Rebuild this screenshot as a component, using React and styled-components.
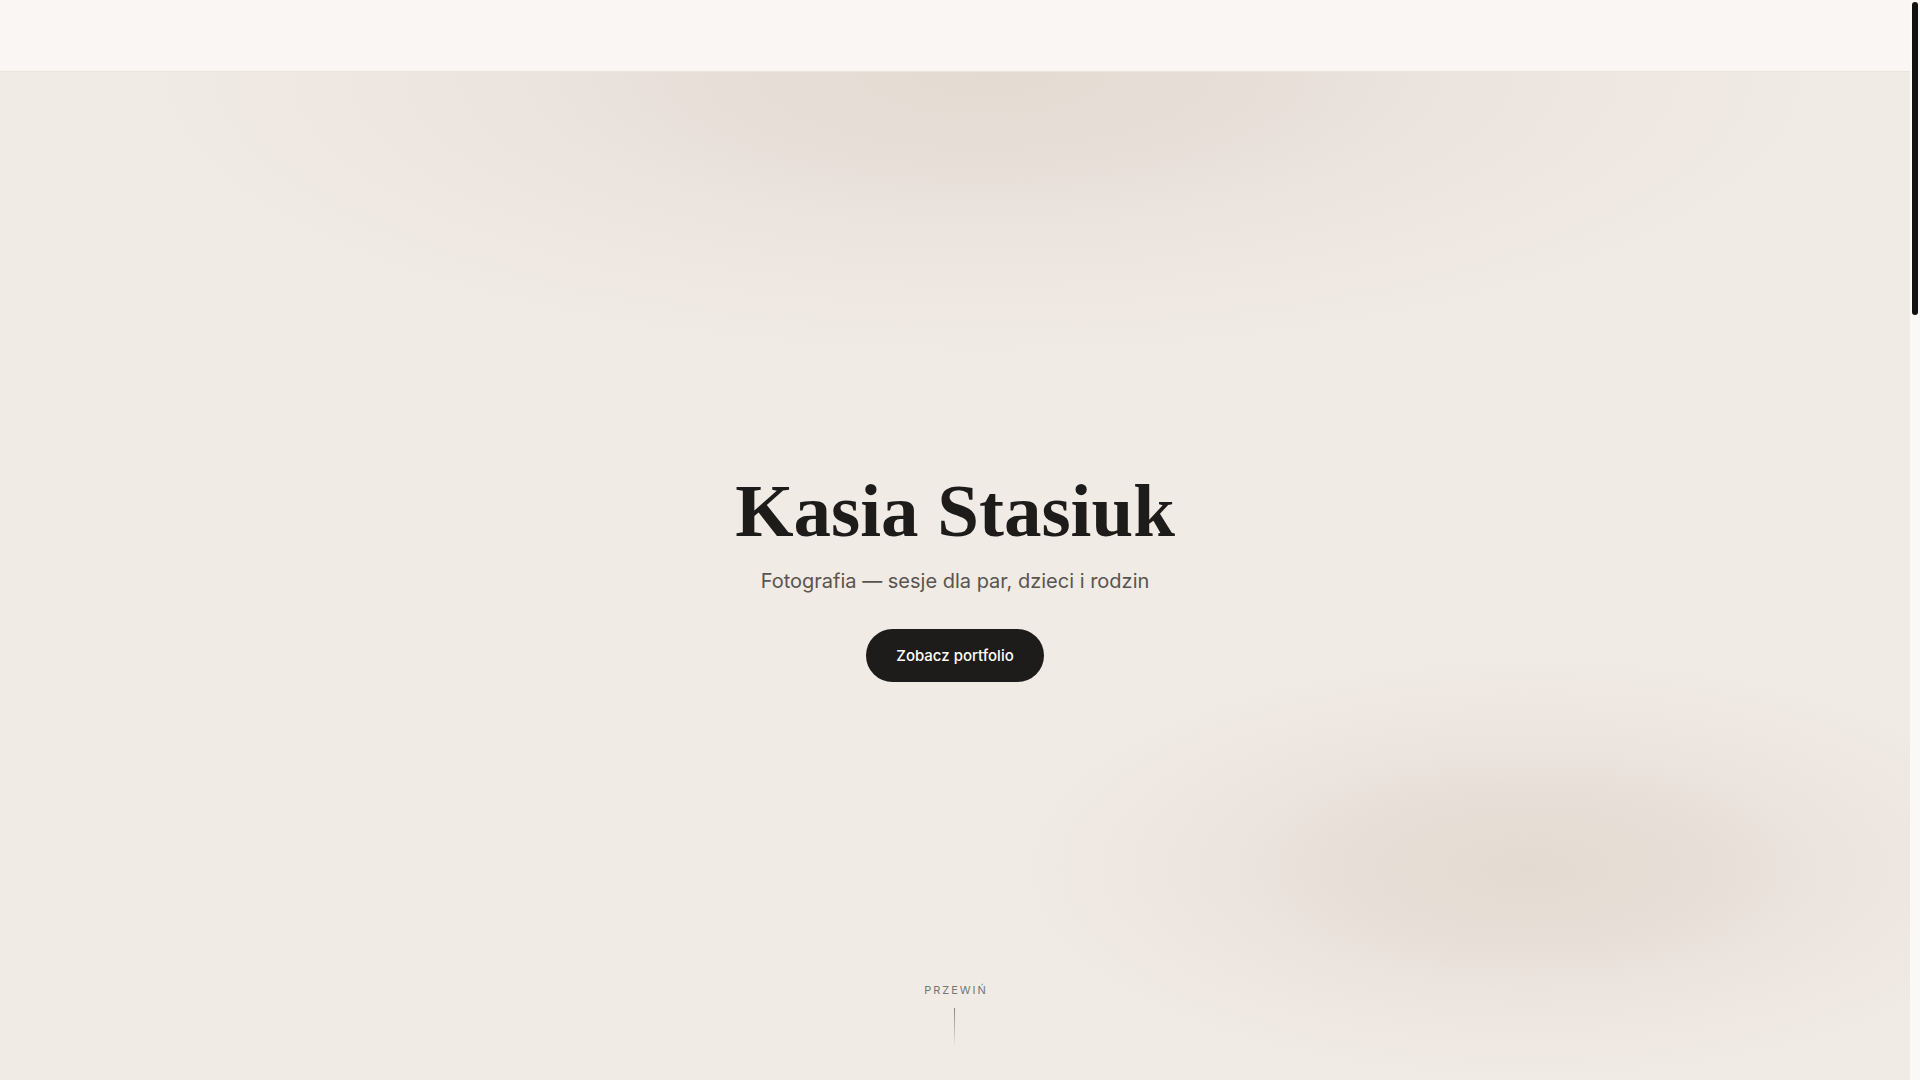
import React, { useEffect, useState } from "react";
import styled, { createGlobalStyle } from "styled-components";

const GlobalStyle = createGlobalStyle`
    *, *::before, *::after { box-sizing: border-box; }
    html { scrollbar-width: none; }
    html::-webkit-scrollbar { display: none; }
    body {
        margin: 0;
        padding-right: 10px;
        background: #f0ebe5;
        color: #1e1c1a;
        font-family: Inter, "Noto Sans", "Liberation Sans", sans-serif;
        -webkit-font-smoothing: antialiased;
    }
`;

// thin custom scrollbar pinned to the right edge
const Rail = styled.div`
    position: fixed;
    top: 0;
    right: 0;
    bottom: 0;
    width: 10px;
    z-index: 50;
    background: #faf9f7;
`;

const Thumb = styled.div`
    position: absolute;
    left: 2px;
    width: 6px;
    border-radius: 3px;
    background: #111111;
`;

const Header = styled.header`
    position: sticky;
    top: 0;
    z-index: 10;
    height: 72px;
    background: rgba(250, 247, 243, 0.94);
    border-bottom: 1px solid #ebe5de;
    backdrop-filter: blur(12px);
`;

const Hero = styled.section`
    min-height: calc(100vh - 72px);
    display: grid;
    grid-template-rows: 1fr auto 1fr;
    justify-items: center;
    background:
        radial-gradient(ellipse 860px 290px at 51.5% 0%, #e3dad1 0%, #e8dfd9 35%, #ede5e0 62%, rgba(240, 235, 229, 0) 100%),
        radial-gradient(ellipse 520px 215px at 80% 79%, #e3dad1 0%, #e8dfd8 38%, #ede5e0 64%, rgba(240, 235, 229, 0) 100%),
        #f0ebe5;
`;

const HeroContent = styled.div`
    grid-row: 2;
    display: flex;
    flex-direction: column;
    align-items: center;
    text-align: center;
`;

const Title = styled.h1`
    margin: 0;
    font-family: "Liberation Serif", "Times New Roman", serif;
    font-weight: 700;
    font-size: 75px;
    line-height: 1.1;
    color: #1e1c1a;
`;

const Subtitle = styled.p`
    margin: 14px 0 0;
    font-size: 20px;
    line-height: 30px;
    color: #5a544f;
`;

const CtaButton = styled.a`
    margin-top: ${props => props.$gap || "33px"};
    display: inline-flex;
    align-items: center;
    justify-content: center;
    height: 53px;
    padding: 0 30px;
    border-radius: 999px;
    background: #1e1c1a;
    color: #ffffff;
    font-size: 15px;
    font-weight: 500;
    text-decoration: none;
`;

const ScrollCue = styled.div`
    grid-row: 3;
    align-self: end;
    padding-bottom: 33px;
    display: flex;
    flex-direction: column;
    align-items: center;
    gap: 10px;
    span {
        font-size: 11px;
        line-height: 16px;
        letter-spacing: 0.18em;
        text-transform: uppercase;
        color: #7b756f;
        margin-right: -0.18em;
    }
    i {
        display: block;
        width: 1px;
        height: 39px;
        background: linear-gradient(#8a847e, rgba(138, 132, 126, 0));
    }
`;

const Section = styled.section`
    padding: ${props => props.$pad || "120px"} 0;
    background: ${props => props.$bg || "#f0ebe5"};
`;

const Container = styled.div`
    width: 1200px;
    margin: 0 auto;
`;

const SectionTitle = styled.h2`
    margin: 0 0 ${props => props.$space || "56px"};
    font-family: "Liberation Serif", "Times New Roman", serif;
    font-size: 44px;
    font-weight: 700;
    text-align: ${props => props.$align || "center"};
    color: #1e1c1a;
`;

const Grid = styled.div`
    display: grid;
    grid-template-columns: repeat(3, 1fr);
    gap: 24px;
`;

const Tile = styled.div`
    aspect-ratio: 4 / 5;
    border-radius: 14px;
    background: ${props => props.$tone};
    display: flex;
    align-items: flex-end;
    padding: 20px;
    font-size: 14px;
    color: #4a4540;
`;

const About = styled.div`
    display: grid;
    grid-template-columns: 1fr 1fr;
    gap: 64px;
    align-items: center;
    p {
        margin: 0 0 18px;
        font-size: 17px;
        line-height: 1.7;
        color: #5a544f;
    }
`;

const Portrait = styled.div`
    aspect-ratio: 1 / 1;
    border-radius: 14px;
    background: linear-gradient(160deg, #e6ddd4, #d8cdc2);
`;

const Contact = styled.div`
    display: flex;
    flex-direction: column;
    align-items: center;
    p {
        margin: 0;
        font-size: 18px;
        color: #5a544f;
    }
`;

const Footer = styled.footer`
    padding: 48px 0;
    border-top: 1px solid #e3dcd4;
    text-align: center;
    font-size: 13px;
    color: #8a847e;
`;

const tiles = [
    ["Sesja narzeczeńska", "#e6ddd4"],
    ["Rodzina w plenerze", "#ddd3c9"],
    ["Dzieci", "#e9e1da"],
    ["Para nad morzem", "#d9cfc5"],
    ["Jesień w parku", "#e4dad0"],
    ["Sesja domowa", "#ded5cc"],
];

// thumb size and offset follow the document scroll
const useScrollThumb = () => {
    const [thumb, setThumb] = useState({ top: 2, height: 318 })
    useEffect(() => {
        const update = () => {
            const doc = document.documentElement
            const view = window.innerHeight
            const total = doc.scrollHeight
            const track = view - 4
            const height = Math.max(40, track * view / total)
            const top = 2 + (track - height) * (window.scrollY / Math.max(1, total - view))
            setThumb({ top, height })
        }
        update()
        window.addEventListener('scroll', update)
        window.addEventListener('resize', update)
        return () => {
            window.removeEventListener('scroll', update)
            window.removeEventListener('resize', update)
        }
    }, [])
    return thumb
}

export default function App() {
    const thumb = useScrollThumb()
    return (
        <>
            <GlobalStyle />
            <Rail>
                <Thumb style={{ top: thumb.top, height: thumb.height }} />
            </Rail>
            <Header />
            <Hero>
                <HeroContent>
                    <Title>Kasia Stasiuk</Title>
                    <Subtitle>Fotografia — sesje dla par, dzieci i rodzin</Subtitle>
                    <CtaButton href="#portfolio">Zobacz portfolio</CtaButton>
                </HeroContent>
                <ScrollCue>
                    <span>Przewiń</span>
                    <i />
                </ScrollCue>
            </Hero>
            <Section id="portfolio">
                <Container>
                    <SectionTitle>Portfolio</SectionTitle>
                    <Grid>
                        {tiles.map(([label, tone]) => (
                            <Tile key={label} $tone={tone}>{label}</Tile>
                        ))}
                    </Grid>
                </Container>
            </Section>
            <Section $bg="#f6f2ed">
                <Container>
                    <About>
                        <Portrait />
                        <div>
                            <SectionTitle $align="left" $space="28px">O mnie</SectionTitle>
                            <p>Fotografuję ludzi w ich naturalnym świetle — bez pozowania, z uważnością na emocje i drobne gesty.</p>
                            <p>Sesje odbywają się w plenerze lub w domu, w spokojnym tempie, tak żeby każdy poczuł się swobodnie.</p>
                        </div>
                    </About>
                </Container>
            </Section>
            <Section $pad="100px">
                <Container>
                    <Contact>
                        <SectionTitle $space="24px">Kontakt</SectionTitle>
                        <p>Napisz, a wspólnie zaplanujemy Twoją sesję.</p>
                        <CtaButton $gap="32px" href="mailto:kontakt@kasiastasiuk.pl">Napisz do mnie</CtaButton>
                    </Contact>
                </Container>
            </Section>
            <Footer>© 2024 Kasia Stasiuk Fotografia</Footer>
        </>
    );
}
